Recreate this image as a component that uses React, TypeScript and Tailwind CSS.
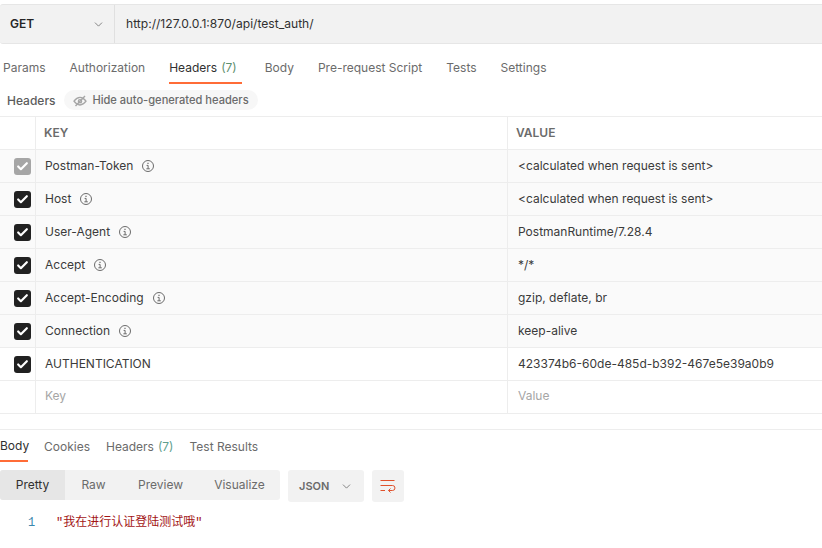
import { Check, ChevronDown } from 'lucide-react';

const rows = [
    { key: 'Postman-Token', value: '<calculated when request is sent>', info: true, muted: true, tint: true },
    { key: 'Host', value: '<calculated when request is sent>', info: true, tint: true },
    { key: 'User-Agent', value: 'PostmanRuntime/7.28.4', info: true, tint: true },
    { key: 'Accept', value: '*/*', info: true, tint: true },
    { key: 'Accept-Encoding', value: 'gzip, deflate, br', info: true, tint: true },
    { key: 'Connection', value: 'keep-alive', info: true, tint: true },
    { key: 'AUTHENTICATION', value: '423374b6-60de-485d-b392-467e5e39a0b9' },
];

const requestTabs = ['Params', 'Authorization', 'Headers', 'Body', 'Pre-request Script', 'Tests', 'Settings'];

function Checkbox({ muted }: { muted?: boolean }) {
    return (
        <div className={`w-[17px] h-[17px] rounded-[3px] flex items-center justify-center ${muted ? 'bg-[#a6a6a6]' : 'bg-[#212121]'}`}>
            <Check size={13} strokeWidth={4} className="text-white" />
        </div>
    );
}

function InfoIcon() {
    return (
        <svg width="12" height="12" viewBox="0 0 12 12" fill="none" stroke="#6b6b6b" strokeWidth="1">
            <circle cx="6" cy="6" r="5.5" />
            <path d="M4.6 5.4H6.1V8.8M4.4 8.8H7.8" />
            <path d="M5.4 3.4H6.6" strokeWidth="1.2" />
        </svg>
    );
}

function HideIcon() {
    return (
        <svg width="14" height="12" viewBox="0 0 14 12" fill="none" stroke="#a6a6a6" strokeWidth="1.4">
            <path d="M1 6.2C3 3.4 5 2.4 7 2.4s4 1 6 3.8C11 9 9 10 7 10S3 9 1 6.2Z" />
            <circle cx="7" cy="6.2" r="1.6" />
            <path d="M2.5 11 12 1" />
        </svg>
    );
}

export default function App() {
    return (
        <div className="w-[822px] h-[548px] overflow-hidden bg-white text-xs text-[#3b3b3b] font-['Inter',sans-serif] pt-1">
            {/* URL bar */}
            <div className="h-10 flex bg-[#f2f2f2] border-y border-[#e6e6e6] rounded-l-[3px]">
                <div className="w-[115px] flex items-center justify-between pl-[10px] pr-[9px] border-r border-[#e0e0e0]">
                    <span className="font-semibold text-[#262626]">GET</span>
                    <ChevronDown size={13} strokeWidth={1.5} className="text-[#6b6b6b]" />
                </div>
                <div className="pl-[11px] flex items-center text-[12.1px] text-[#303030]">http://127.0.0.1:870/api/test_auth/</div>
            </div>

            {/* Request tabs */}
            <div className="h-[40px] flex items-stretch pl-[3px] gap-6 text-[#6b6b6b]">
                {requestTabs.map(tab => (
                    <div
                        key={tab}
                        className={`flex items-center pt-[10px] border-b-2 ${tab === 'Headers' ? 'border-[#ff6c37] text-[#303030] pr-[5px] -mr-[1px]' : 'border-transparent'}`}
                    >
                        {tab}
                        {tab === 'Headers' && <span className="ml-1 text-[#5f8f6f]">(7)</span>}
                    </div>
                ))}
            </div>

            {/* Headers toolbar */}
            <div className="h-[32px] flex items-center pl-[7px] gap-[8px]">
                <span className="font-medium text-[#5c5c5c] w-[49px] pt-[1px]">Headers</span>
                <div className="h-5 w-[194px] rounded-full bg-[#f7f7f7] flex items-center justify-center gap-[5px] pt-[1px] text-[11.1px] font-medium text-[#6b6b6b]">
                    <HideIcon />
                    Hide auto-generated headers
                </div>
            </div>

            {/* Table */}
            <div className="border-t border-[#ededed]">
                <div className="h-[33px] flex border-b border-[#ededed] font-semibold text-[#6b6b6b]">
                    <div className="w-9 border-r border-[#ededed]" />
                    <div className="w-[472px] border-r border-[#ededed] pl-2 flex items-center">KEY</div>
                    <div className="flex-1 pl-2 flex items-center">VALUE</div>
                </div>
                {rows.map(row => (
                    <div key={row.key} className={`h-[33px] flex border-b border-[#ededed] ${row.tint ? 'bg-[#fafafa]' : ''}`}>
                        <div className="w-9 border-r border-[#ededed] flex items-center justify-end pr-[4px]">
                            <Checkbox muted={row.muted} />
                        </div>
                        <div className="w-[472px] border-r border-[#ededed] pl-[9px] flex items-center gap-[9px]">
                            {row.key}
                            {row.info && <InfoIcon />}
                        </div>
                        <div className="flex-1 pl-[10px] flex items-center">{row.value}</div>
                    </div>
                ))}
                <div className="h-[33px] flex border-b border-[#ededed] text-[#a6a6a6]">
                    <div className="w-9 border-r border-[#ededed]" />
                    <div className="w-[472px] border-r border-[#ededed] pl-[9px] pb-[2px] flex items-center">Key</div>
                    <div className="flex-1 pl-[10px] pb-[2px] flex items-center">Value</div>
                </div>
            </div>

            {/* Response */}
            <div className="mt-[15px] border-t border-[#ededed]">
                <div className="h-[32px] flex items-stretch gap-4 text-[#6b6b6b]">
                    <div className="w-[28px] flex items-center pt-[1px] border-b-2 border-[#ff6c37] text-[#303030]">Body</div>
                    <div className="flex items-center pt-[1px]">Cookies</div>
                    <div className="flex items-center pt-[1px]">Headers<span className="ml-1 text-[#5f9f8f]">(7)</span></div>
                    <div className="flex items-center pt-[1px]">Test Results</div>
                </div>
                <div className="flex mt-2 gap-2 text-[#6b6b6b]">
                    <div className="h-[30px] w-[280px] flex bg-[#f2f2f2] rounded-[3px] overflow-hidden">
                        <div className="w-[65px] bg-[#e6e6e6] flex items-center justify-center text-[#303030]">Pretty</div>
                        <div className="w-[57px] flex items-center justify-center">Raw</div>
                        <div className="w-[77px] flex items-center justify-center">Preview</div>
                        <div className="flex-1 flex items-center justify-center">Visualize</div>
                    </div>
                    <div className="h-8 w-[76px] bg-[#f2f2f2] rounded-[3px] flex items-center justify-between px-[11px] text-[11px] font-semibold">
                        JSON
                        <ChevronDown size={13} strokeWidth={1.5} />
                    </div>
                    <div className="h-8 w-8 bg-[#f2f2f2] rounded-[3px] flex items-center justify-center">
                        <svg width="18" height="14" viewBox="0 0 18 14" fill="none" stroke="#e0512c" strokeWidth="1">
                            <path d="M1.5 1.5h14M1.5 6.5h12a2.5 2.5 0 0 1 0 5H9.5M1.5 11.5H6M11.5 9.5l-2 2 2 2" />
                        </svg>
                    </div>
                </div>
                <div className="flex mt-[13px] font-['Liberation_Mono','Noto_Sans_CJK_SC',monospace]">
                    <span className="w-[56px] pl-7 text-[#3a87ad]">1</span>
                    <span className="text-[#a31515]">"我在进行认证登陆测试哦"</span>
                </div>
            </div>
        </div>
    );
}
